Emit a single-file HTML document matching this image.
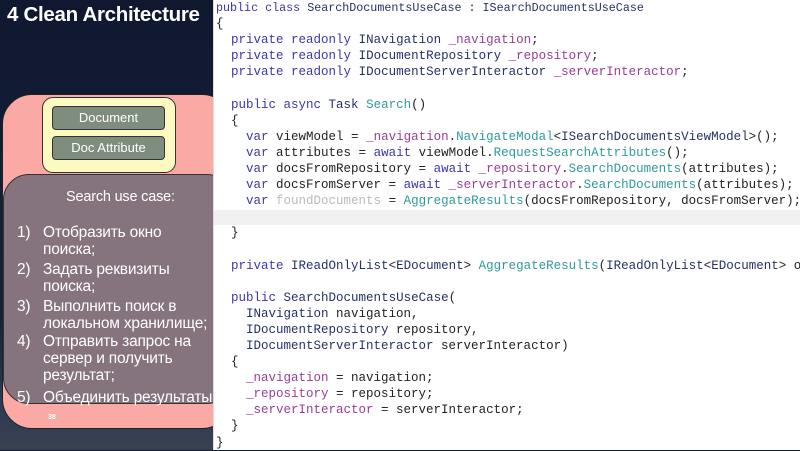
<!DOCTYPE html>
<html><head><meta charset="utf-8"><style>
*{margin:0;padding:0;box-sizing:border-box}
body{width:800px;height:450px;overflow:hidden;position:relative;background:#141c33;font-family:"Liberation Sans","DejaVu Sans",sans-serif}
.left{position:absolute;left:0;top:0;width:214px;height:450px;background:linear-gradient(#101830 0%,#17213d 70%,#2a3a55 88%,#3a4050 100%)}
.title{position:absolute;left:7px;top:3px;color:#fff;font-weight:bold;font-size:20.5px;letter-spacing:-0.3px}
.pink{position:absolute;left:2px;top:94px;width:230px;height:335px;background:#fba9a4;border:1.5px solid #222;border-radius:30px}
.yellow{position:absolute;left:42px;top:97px;width:134px;height:76px;background:#fcfac1;border:1.5px solid #333;border-radius:11px}
.btn{position:absolute;left:52px;width:113px;height:24px;background:#7f8d7f;border:1.5px solid #333;border-radius:4px;color:#fff;font-size:13px;text-align:center;line-height:21px}
.gray{position:absolute;left:3px;top:174px;width:230px;height:230px;background:#85737d;border:1px solid #333;border-radius:26px;color:#fff;font-size:15.5px;letter-spacing:-0.2px}
.gray .h{position:absolute;left:62px;top:14px;font-size:14.5px}
.li{position:absolute;left:13px;line-height:17px}
.li span{position:absolute;left:26px;white-space:nowrap}
.num{position:absolute;left:48px;top:414px;color:#fff;font-size:7px;font-weight:bold}
.code{position:absolute;left:213px;top:0;width:587px;height:450px;background:#fff;border-left:1px solid #ddd}
.hl{position:absolute;left:0;top:210px;width:587px;height:15px;background:#f0f0f0}
pre{position:absolute;left:2px;top:0;font-family:"Liberation Mono",monospace;font-size:12.5px;line-height:16.1px;color:#222;white-space:pre}
.hd{font-size:11.7px}
.k{color:#3a36b0}.t{color:#26306a}.f{color:#9a3c98}.m{color:#2f9a9c}.g{color:#bbb}
</style></head><body>
<div class="left"></div>
<div class="title">4 Clean Architecture</div>
<div class="pink"></div>
<div class="yellow"></div>
<div class="btn" style="top:106px">Document</div>
<div class="btn" style="top:136px">Doc Attribute</div>
<div class="gray">
<div class="h">Search use case:</div>
<div class="li" style="top:49px">1)<span>Отобразить окно<br>поиска;</span></div>
<div class="li" style="top:86px">2)<span>Задать реквизиты<br>поиска;</span></div>
<div class="li" style="top:123px">3)<span>Выполнить поиск в<br>локальном хранилище;</span></div>
<div class="li" style="top:158px">4)<span>Отправить запрос на<br>сервер и получить<br>результат;</span></div>
<div class="li" style="top:214px">5)<span>Объединить результаты</span></div>
</div>
<div class="num">38</div>
<div class="code"><div class="hl"></div>
<pre><span class="hd"><span class="k">public class</span> <span class="t">SearchDocumentsUseCase</span> : <span class="t">ISearchDocumentsUseCase</span></span>
{
  <span class="k">private readonly</span> <span class="t">INavigation</span> <span class="f">_navigation</span>;
  <span class="k">private readonly</span> <span class="t">IDocumentRepository</span> <span class="f">_repository</span>;
  <span class="k">private readonly</span> <span class="t">IDocumentServerInteractor</span> <span class="f">_serverInteractor</span>;

  <span class="k">public async</span> <span class="t">Task</span> <span class="m">Search</span>()
  {
    <span class="k">var</span> viewModel = <span class="f">_navigation</span>.<span class="m">NavigateModal</span>&lt;<span class="t">ISearchDocumentsViewModel</span>&gt;();
    <span class="k">var</span> attributes = <span class="k">await</span> viewModel.<span class="m">RequestSearchAttributes</span>();
    <span class="k">var</span> docsFromRepository = <span class="k">await</span> <span class="f">_repository</span>.<span class="m">SearchDocuments</span>(attributes);
    <span class="k">var</span> docsFromServer = <span class="k">await</span> <span class="f">_serverInteractor</span>.<span class="m">SearchDocuments</span>(attributes);
    <span class="k">var</span> <span class="g">foundDocuments</span> = <span class="m">AggregateResults</span>(docsFromRepository, docsFromServer);

  }

  <span class="k">private</span> <span class="t">IReadOnlyList</span>&lt;<span class="t">EDocument</span>&gt; <span class="m">AggregateResults</span>(<span class="t">IReadOnlyList</span>&lt;<span class="t">EDocument</span>&gt; o

  <span class="k">public</span> <span class="t">SearchDocumentsUseCase</span>(
    <span class="t">INavigation</span> navigation,
    <span class="t">IDocumentRepository</span> repository,
    <span class="t">IDocumentServerInteractor</span> serverInteractor)
  {
    <span class="f">_navigation</span> = navigation;
    <span class="f">_repository</span> = repository;
    <span class="f">_serverInteractor</span> = serverInteractor;
  }
}</pre></div>
</body></html>
